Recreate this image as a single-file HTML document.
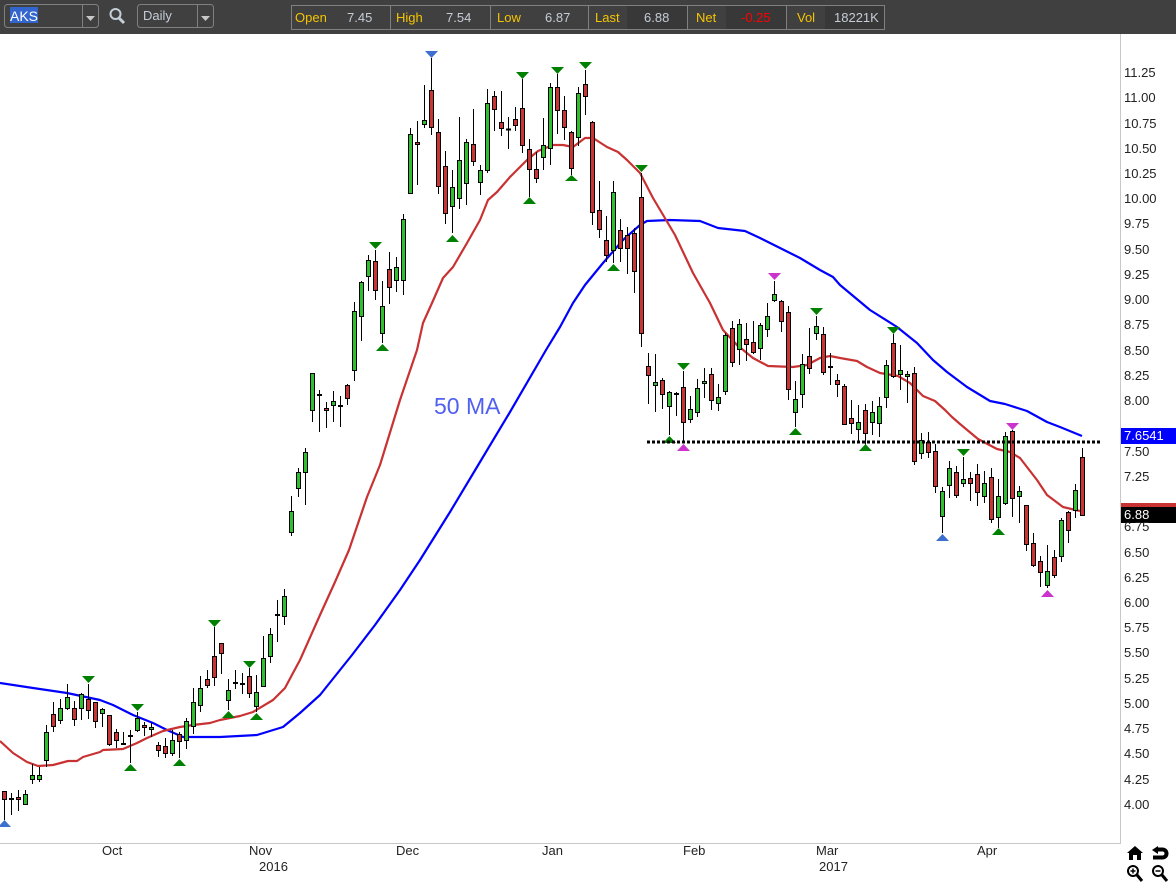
<!DOCTYPE html>
<html><head><meta charset="utf-8"><title>AKS</title>
<style>
html,body{margin:0;padding:0;background:#fff}
#p{position:relative;width:1176px;height:883px;overflow:hidden;background:#fff;font:13px "Liberation Sans",Arial,sans-serif}
#top{position:absolute;left:0;top:0;width:1176px;height:34px;background:#404040}
.a{position:absolute;white-space:nowrap;line-height:14px}
.y{position:absolute;left:1124px;color:#222;line-height:14px}
.x{position:absolute;color:#222;line-height:14px}
.l{color:#f5c400}.v{color:#c4ccd6}
.cell{position:absolute;top:6px;height:23px;background:#383838}
</style></head><body><div id="p">
<div id="top"></div>
<div class="cell" style="left:627px;width:60px"></div>
<div class="cell" style="left:726px;width:60px"></div>
<div class="cell" style="left:825px;width:59px"></div>
<svg width="1176" height="34" style="position:absolute;left:0;top:0">
<g fill="none" stroke="#808080">
<rect x="4.5" y="4.5" width="94" height="23" rx="3"/><path d="M82.5 5V27"/>
<rect x="137.5" y="4.5" width="76" height="23" rx="3"/><path d="M197.5 5V27"/>
<rect x="291.5" y="5.5" width="593" height="24"/>
<path d="M390.5 6V29M490.5 6V29M588.5 6V29M687.5 6V29M786.5 6V29"/>
</g>
<path d="M86 16h9l-4.500 5zM201 16h9l-4.500 5z" fill="#c8c8c8"/>
<rect x="10" y="7" width="28" height="16" fill="#3366cc"/>
<circle cx="115.500" cy="14" r="5" fill="none" stroke="#c4ced8" stroke-width="2"/>
<path d="M119 18l5 5" stroke="#c4ced8" stroke-width="3"/>
</svg>
<div class="a" style="left:10px;top:9px;color:#fff;font-size:14px">AKS</div>
<div class="a" style="left:143px;top:9px;color:#c4ccd6;font-size:13px">Daily</div>
<div class="a l" style="left:295px;top:11px">Open</div><div class="a v" style="left:347px;top:11px">7.45</div>
<div class="a l" style="left:396px;top:11px">High</div><div class="a v" style="left:446px;top:11px">7.54</div>
<div class="a l" style="left:497px;top:11px">Low</div><div class="a v" style="left:545px;top:11px">6.87</div>
<div class="a l" style="left:595px;top:11px">Last</div><div class="a v" style="left:644px;top:11px">6.88</div>
<div class="a l" style="left:696px;top:11px">Net</div><div class="a" style="left:741px;top:11px;color:#f00">-0.25</div>
<div class="a l" style="left:797px;top:11px">Vol</div><div class="a v" style="left:834px;top:11px">18221K</div>

<svg width="1176" height="883" style="position:absolute;left:0;top:0">
<path d="M1120.500 34V843.500H0" fill="none" stroke="#c8c8c8"/>
<g fill="none" stroke-width="2.200" stroke-linejoin="round">
<polyline stroke="#0000ff" points="0,683 33,688 67,693 100,700 113,705 133,715 153,723 167,730 183,737 220,737 257,735 283,727 300,713 320,695 352,655 375,625 400,590 420,560 450,512 480,462 510,412 546,350 560,327 573,303 585,285 603,263 623,240 640,225 647,221 670,220 700,221 718,228 745,231 760,238 780,248 800,258 820,270 833,277 840,285 870,310 897,327 917,343 933,360 947,372 967,387 990,401 1005,404 1027,411 1047,422 1060,427 1082,436"/>
<polyline stroke="#c83232" points="0,741 13,753 27,762 38,766 53,765 68,761 77,761 83,757 100,752 103,750 123,749 137,743 147,738 163,731 180,727 193,725 210,723 220,720 240,716 253,712 273,700 285,688 293,673 300,660 320,615 335,582 349,550 367,497 380,465 400,400 417,350 423,323 432,303 443,278 453,267 467,243 480,220 488,200 497,192 510,177 527,160 538,151 553,145 563,145 573,147 585,138 593,138 607,147 618,152 627,160 640,173 653,198 675,235 693,273 710,303 723,330 737,345 753,358 768,366 793,367 807,365 820,358 830,356 840,358 857,361 867,367 880,373 898,376 910,383 923,396 935,401 945,410 952,417 960,424 978,439 997,449 1010,452 1020,458 1037,480 1047,495 1063,507 1080,511"/>
</g>
<path fill="none" stroke="#000" d="M4.500 791V820M11.500 793V815M18.500 790V811M25.500 790V805M32.500 764V784M39.500 767V782M46.500 725V767M53.500 702V732M60.500 699V724M67.500 684V710M74.500 701V726M81.500 693V720M88.500 684V719M95.500 702V728M102.500 708V727M109.500 715V746M116.500 729V748M123.500 732V745M130.500 730V763M137.500 712V732M144.500 722V736M151.500 723V737M158.500 742V757M165.500 738V758M172.500 730V756M179.500 732V758M186.500 718V749M193.500 688V734M200.500 676V712M207.500 670V688M214.500 627V686M221.500 643V674M228.500 679V710M235.500 670V689M242.500 673V694M249.500 668V698M256.500 675V712M263.500 636V687M270.500 628V663M277.500 600V642M284.500 589V625M291.500 496V536M298.500 468V497M305.500 448V505M312.500 373V422M319.500 390V432M326.500 402V428M333.500 391V422M340.500 396V427M347.500 384V405M354.500 302V381M361.500 281V341M368.500 255V291M375.500 250V300M382.500 281V343M389.500 252V304M396.500 257V292M403.500 214V295M410.500 128V194M417.500 121V185M424.500 85V128M431.500 58V135M438.500 119V194M445.500 151V224M452.500 170V233M459.500 117V209M466.500 139V205M473.500 109V166M480.500 165V195M487.500 89V173M494.500 91V131M501.500 91V136M508.500 117V149M515.500 107V131M522.500 79V153M529.500 139V197M536.500 152V183M543.500 118V170M550.500 83V165M557.500 74V134M564.500 96V140M571.500 131V175M578.500 87V146M585.500 70V115M592.500 121V225M599.500 181V238M606.500 216V262M613.500 181V263M620.500 219V262M627.500 227V274M634.500 228V293M641.500 173V347M648.500 353V404M655.500 354V412M662.500 378V409M669.500 391V435M676.500 392V416M683.500 371V443M690.500 396V423M697.500 379V417M704.500 368V398M711.500 368V410M718.500 384V411M725.500 333V395M732.500 321V367M739.500 319V365M746.500 323V361M753.500 321V354M760.500 323V360M767.500 303V337M774.500 281V302M781.500 300V332M788.500 306V400M795.500 381V427M802.500 354V408M809.500 328V374M816.500 316V340M823.500 327V375M830.500 353V385M837.500 374V397M844.500 384V425M851.500 400V434M858.500 405V441M865.500 404V445M872.500 401V435M879.500 397V437M886.500 360V408M893.500 334V378M900.500 345V390M907.500 371V403M914.500 367V465M921.500 433V459M928.500 432V458M935.500 444V493M942.500 487V533M949.500 461V498M956.500 466V498M963.500 457V487M970.500 472V501M977.500 464V506M984.500 471V503M991.500 468V523M998.500 479V528M1005.500 432V505M1012.500 430V517M1019.500 486V523M1026.500 505V551M1033.500 533V567M1040.500 556V587M1047.500 545V588M1054.500 550V578M1061.500 518V562M1068.500 511V543M1075.500 484V518M1082.500 448V516"/>
<path fill="none" stroke="#000" stroke-width="2" d="M9 799h5M121 744h5M128 736h5M233 683h5M240 684h5M275 615h5M317 395h5M338 406h5M674 394h5M828 367h5M506 129.500h5"/>
<path fill="#c93434" stroke="#000" d="M2.500 791.500h4V799.500h-4zM16.500 797.500h4V799.500h-4zM51.500 714.500h4V726.500h-4zM72.500 708.500h4V719.500h-4zM86.500 699.500h4V710.500h-4zM93.500 702.500h4V721.500h-4zM107.500 715.500h4V744.500h-4zM114.500 732.500h4V740.500h-4zM142.500 725.500h4V727.500h-4zM156.500 745.500h4V750.500h-4zM163.500 746.500h4V753.500h-4zM177.500 734.500h4V741.500h-4zM205.500 679.500h4V685.500h-4zM212.500 656.500h4V677.500h-4zM219.500 643.500h4V653.500h-4zM247.500 676.500h4V693.500h-4zM324.500 408.500h4V410.500h-4zM345.500 385.500h4V398.500h-4zM373.500 261.500h4V290.500h-4zM387.500 269.500h4V287.500h-4zM415.500 142.500h4V144.500h-4zM429.500 90.500h4V127.500h-4zM436.500 132.500h4V186.500h-4zM443.500 166.500h4V213.500h-4zM471.500 144.500h4V161.500h-4zM492.500 96.500h4V109.500h-4zM499.500 122.500h4V128.500h-4zM513.500 119.500h4V125.500h-4zM520.500 108.500h4V145.500h-4zM527.500 149.500h4V169.500h-4zM534.500 169.500h4V178.500h-4zM555.500 87.500h4V110.500h-4zM562.500 110.500h4V127.500h-4zM569.500 132.500h4V168.500h-4zM583.500 84.500h4V96.500h-4zM590.500 122.500h4V212.500h-4zM597.500 210.500h4V229.500h-4zM604.500 240.500h4V255.500h-4zM618.500 230.500h4V248.500h-4zM625.500 235.500h4V248.500h-4zM632.500 233.500h4V271.500h-4zM639.500 197.500h4V333.500h-4zM646.500 366.500h4V375.500h-4zM660.500 380.500h4V394.500h-4zM681.500 387.500h4V422.500h-4zM709.500 374.500h4V400.500h-4zM730.500 328.500h4V362.500h-4zM744.500 339.500h4V344.500h-4zM751.500 342.500h4V352.500h-4zM779.500 301.500h4V321.500h-4zM786.500 312.500h4V389.500h-4zM807.500 356.500h4V368.500h-4zM821.500 334.500h4V372.500h-4zM835.500 380.500h4V384.500h-4zM842.500 386.500h4V424.500h-4zM849.500 418.500h4V423.500h-4zM863.500 410.500h4V433.500h-4zM891.500 343.500h4V376.500h-4zM912.500 373.500h4V461.500h-4zM926.500 442.500h4V452.500h-4zM933.500 451.500h4V486.500h-4zM954.500 472.500h4V495.500h-4zM968.500 478.500h4V483.500h-4zM975.500 474.500h4V492.500h-4zM989.500 477.500h4V519.500h-4zM1010.500 431.500h4V498.500h-4zM1024.500 505.500h4V544.500h-4zM1031.500 543.500h4V565.500h-4zM1038.500 561.500h4V572.500h-4zM1052.500 557.500h4V575.500h-4zM1066.500 512.500h4V530.500h-4zM1080.500 457.500h4V515.500h-4z"/>
<path fill="#2fbf2f" stroke="#000" d="M23.500 794.500h4V804.500h-4zM30.500 775.500h4V779.500h-4zM37.500 775.500h4V779.500h-4zM44.500 732.500h4V760.500h-4zM58.500 708.500h4V720.500h-4zM65.500 697.500h4V708.500h-4zM79.500 694.500h4V708.500h-4zM100.500 709.500h4V713.500h-4zM135.500 718.500h4V730.500h-4zM149.500 727.500h4V729.500h-4zM170.500 740.500h4V753.500h-4zM184.500 721.500h4V740.500h-4zM191.500 702.500h4V726.500h-4zM198.500 688.500h4V705.500h-4zM226.500 690.500h4V700.500h-4zM254.500 692.500h4V706.500h-4zM261.500 658.500h4V686.500h-4zM268.500 634.500h4V656.500h-4zM282.500 596.500h4V616.500h-4zM289.500 511.500h4V532.500h-4zM296.500 472.500h4V488.500h-4zM303.500 452.500h4V472.500h-4zM310.500 373.500h4V410.500h-4zM331.500 401.500h4V405.500h-4zM352.500 311.500h4V370.500h-4zM359.500 282.500h4V316.500h-4zM366.500 260.500h4V276.500h-4zM380.500 306.500h4V333.500h-4zM394.500 267.500h4V280.500h-4zM401.500 219.500h4V280.500h-4zM408.500 134.500h4V193.500h-4zM422.500 120.500h4V124.500h-4zM450.500 187.500h4V206.500h-4zM457.500 160.500h4V198.500h-4zM464.500 142.500h4V183.500h-4zM478.500 170.500h4V182.500h-4zM485.500 103.500h4V170.500h-4zM541.500 145.500h4V157.500h-4zM548.500 87.500h4V148.500h-4zM576.500 93.500h4V137.500h-4zM611.500 192.500h4V250.500h-4zM653.500 382.500h4V385.500h-4zM667.500 392.500h4V406.500h-4zM688.500 409.500h4V419.500h-4zM695.500 388.500h4V412.500h-4zM702.500 381.500h4V383.500h-4zM716.500 397.500h4V403.500h-4zM723.500 335.500h4V391.500h-4zM737.500 324.500h4V349.500h-4zM758.500 325.500h4V348.500h-4zM765.500 316.500h4V329.500h-4zM772.500 294.500h4V300.500h-4zM793.500 399.500h4V412.500h-4zM800.500 364.500h4V394.500h-4zM814.500 326.500h4V333.500h-4zM856.500 422.500h4V429.500h-4zM870.500 412.500h4V422.500h-4zM877.500 406.500h4V423.500h-4zM884.500 365.500h4V397.500h-4zM898.500 370.500h4V374.500h-4zM905.500 374.500h4V376.500h-4zM919.500 440.500h4V453.500h-4zM940.500 491.500h4V516.500h-4zM947.500 468.500h4V485.500h-4zM961.500 479.500h4V483.500h-4zM982.500 483.500h4V496.500h-4zM996.500 496.500h4V517.500h-4zM1003.500 436.500h4V503.500h-4zM1017.500 491.500h4V496.500h-4zM1045.500 571.500h4V585.500h-4zM1059.500 520.500h4V556.500h-4zM1073.500 490.500h4V510.500h-4z"/>
<path fill="#008000" d="M82 676h13l-6.500 7zM124 771h13l-6.500-7zM131 704h13l-6.500 7zM173 766h13l-6.500-7zM208 620h13l-6.500 7zM222 718h13l-6.500-7zM243 661h13l-6.500 7zM250 720h13l-6.500-7zM369 242h13l-6.500 7zM376 351h13l-6.500-7zM446 242h13l-6.500-7zM516 72h13l-6.500 7zM523 204h13l-6.500-7zM551 67h13l-6.500 7zM579 62h13l-6.500 7zM565 181h13l-6.500-6zM607 271h13l-6.500-7zM635 165h13l-6.500 7zM677 363h13l-6.500 7zM663 443h13l-6.500-7zM810 308h13l-6.500 7zM789 435h13l-6.500-7zM887 327h13l-6.500 7zM859 451h13l-6.500-7zM957 449h13l-6.500 7zM992 535h13l-6.500-7z"/>
<path fill="#3c6fd0" d="M-2 827h13l-6.500-7zM425 51h13l-6.500 7zM936 541h13l-6.500-7z"/>
<path fill="#cc33cc" d="M677 451h13l-6.500-7zM768 273h13l-6.500 7zM1006 423h13l-6.500 7zM1041 597h13l-6.500-7z"/>
<path d="M647 442H1101" stroke="#000" stroke-width="3" stroke-dasharray="3 2" fill="none"/>
<rect x="1121" y="503" width="55" height="4" fill="#c83232"/>
<rect x="1121" y="507" width="55" height="16" fill="#000"/>
<rect x="1121" y="428" width="55" height="16" fill="#0000ff"/>
<g fill="#000">
<path d="M1135 846l-8 7h2v7h4v-5h4v5h4v-7h2z"/>
<path d="M1158 846l-6 4 6 4v-2.500h4c2 0 2.500 1 2.500 2s-.5 2-2.500 2h-9v4h9c4.500 0 6.500-3 6.500-6s-2-6-6.500-6h-4z"/>
</g>
<g fill="none" stroke="#000">
<circle cx="1133" cy="871" r="5" stroke-width="2"/><path d="M1130.500 871h5M1133 868.500v5" stroke-width="1.500"/><path d="M1137 875l5 6" stroke-width="3"/>
<circle cx="1158" cy="871" r="5" stroke-width="2"/><path d="M1155.500 871h5" stroke-width="1.500"/><path d="M1162 875l5 6" stroke-width="3"/>
</g>
</svg>
<div class="a" style="left:434px;top:392px;line-height:28px;font-size:23px;color:#5060f0">50 MA</div>
<div class="y" style="top:66px">11.25</div><div class="y" style="top:91px">11.00</div><div class="y" style="top:117px">10.75</div><div class="y" style="top:142px">10.50</div><div class="y" style="top:167px">10.25</div><div class="y" style="top:192px">10.00</div><div class="y" style="top:217px">9.75</div><div class="y" style="top:243px">9.50</div><div class="y" style="top:268px">9.25</div><div class="y" style="top:293px">9.00</div><div class="y" style="top:318px">8.75</div><div class="y" style="top:344px">8.50</div><div class="y" style="top:369px">8.25</div><div class="y" style="top:394px">8.00</div>
<div class="y" style="top:429px;color:#fff">7.6541</div>
<div class="y" style="top:445px">7.50</div><div class="y" style="top:470px">7.25</div>
<div class="y" style="top:508px;color:#fff">6.88</div>
<div class="y" style="top:520px">6.75</div><div class="y" style="top:546px">6.50</div><div class="y" style="top:571px">6.25</div><div class="y" style="top:596px">6.00</div><div class="y" style="top:621px">5.75</div><div class="y" style="top:646px">5.50</div><div class="y" style="top:672px">5.25</div><div class="y" style="top:697px">5.00</div><div class="y" style="top:722px">4.75</div><div class="y" style="top:747px">4.50</div><div class="y" style="top:773px">4.25</div><div class="y" style="top:798px">4.00</div>
<div class="x" style="left:102px;top:844px">Oct</div><div class="x" style="left:249px;top:844px">Nov</div><div class="x" style="left:396px;top:844px">Dec</div><div class="x" style="left:542px;top:844px">Jan</div><div class="x" style="left:683px;top:844px">Feb</div><div class="x" style="left:816px;top:844px">Mar</div><div class="x" style="left:977px;top:844px">Apr</div>
<div class="x" style="left:259px;top:860px">2016</div><div class="x" style="left:819px;top:860px">2017</div>
</div></body></html>
